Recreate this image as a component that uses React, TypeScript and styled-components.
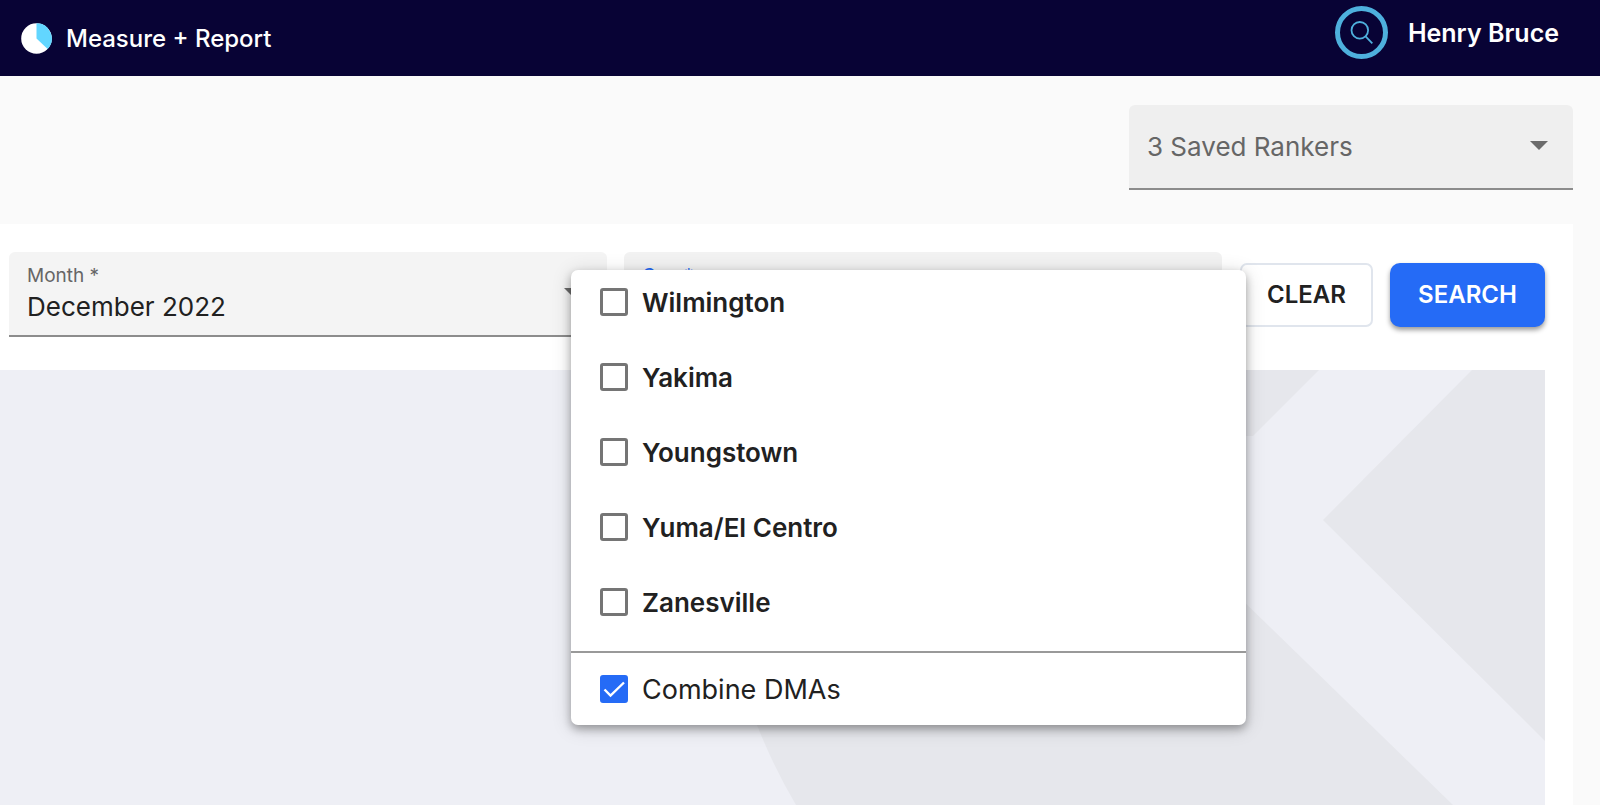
import React from "react";
import styled, { createGlobalStyle } from "styled-components";

const GlobalStyle = createGlobalStyle`
  *, *::before, *::after { box-sizing: border-box; }
  body {
    margin: 0;
    background: #fafafa;
    color: #212121;
    font-family: Inter, "Liberation Sans", sans-serif;
    font-size: 26px;
  }
  button, input, select { font: inherit; color: inherit; }
`;

const Page = styled.div`
  min-height: 100vh;
  display: flex;
  flex-direction: column;
  overflow: hidden;
`;

const Header = styled.header`
  height: 76px;
  padding: 0 41px 0 21px;
  display: flex;
  justify-content: space-between;
  align-items: center;
  background: #080335;
  color: #fff;
`;

const Brand = styled.a`
  display: flex;
  align-items: center;
  gap: 14px;
  color: inherit;
  text-decoration: none;
  font-size: 24px;
  font-weight: 500;
`;

const Account = styled.div`
  display: flex;
  align-items: center;
  gap: 20px;
  padding-bottom: 11px;
  font-size: 25px;
  font-weight: 600;
`;

const RoundButton = styled.button`
  width: 53px;
  height: 53px;
  padding: 0;
  display: grid;
  place-items: center;
  border: 5px solid #4eb0dd;
  border-radius: 50%;
  background: none;
  color: #4eb0dd;
`;

const SavedBar = styled.div`
  display: flex;
  justify-content: flex-end;
  padding: 29px 27px 34px;
`;

const Field = styled.div<{ $tone: string }>`
  position: relative;
  height: 85px;
  flex: 1;
  display: flex;
  flex-direction: column;
  justify-content: center;
  border-bottom: 2px solid #8c8c8c;
  border-radius: 6px 6px 0 0;
  background: ${(p) => p.$tone};
`;

const SavedField = styled(Field)`
  flex: 0 0 444px;
`;

const FieldLabel = styled.label<{ $active?: boolean }>`
  padding: 0 18px;
  font-size: 19px;
  line-height: 26px;
  color: ${(p) => (p.$active ? "#256bf6" : "#666")};
`;

const Select = styled.select<{ $muted?: boolean }>`
  width: 100%;
  height: 36px;
  padding: 0 18px;
  border: 0;
  outline: 0;
  appearance: none;
  background: none;
  color: ${(p) => (p.$muted ? "#666" : "#212121")};
`;

const Caret = styled.svg`
  position: absolute;
  right: 25px;
  top: 36px;
  width: 18px;
  height: 9px;
  fill: #6b6b6b;
  pointer-events: none;
`;

const Panel = styled.main`
  flex: 1;
  display: flex;
  flex-direction: column;
  margin-right: 27px;
  padding-right: 28px;
  background: #fff;
`;

const Filters = styled.form`
  display: flex;
  align-items: center;
  gap: 18px;
  padding: 28px 0 33px 9px;
`;

const Fields = styled.div`
  flex: 1;
  display: flex;
  gap: 17px;
`;

const Actions = styled.div`
  display: flex;
  gap: 17px;
`;

const Button = styled.button<{ $primary?: boolean }>`
  height: 64px;
  width: ${(p) => (p.$primary ? 155 : 133)}px;
  padding: 0;
  border: ${(p) => (p.$primary ? "0" : "2px solid #e0e5ed")};
  border-radius: ${(p) => (p.$primary ? 10 : 7)}px;
  background: ${(p) => (p.$primary ? "#256bf6" : "#fff")};
  color: ${(p) => (p.$primary ? "#fff" : "#212121")};
  box-shadow: ${(p) => (p.$primary ? "0 3px 5px rgba(0, 0, 0, 0.4)" : "none")};
  font-size: 24px;
  font-weight: 600;
`;

const Menu = styled.div`
  position: absolute;
  z-index: 2;
  top: 18px;
  left: -53px;
  right: -24px;
  border-radius: 7px;
  background: #fff;
  box-shadow: 0 4px 8px rgba(0, 0, 0, 0.3), 0 3px 20px rgba(0, 0, 0, 0.16);
`;

const Options = styled.div`
  display: flex;
  flex-direction: column;
  gap: 47px;
  padding: 18px 29px 35px;
  font-weight: 600;
`;

const Option = styled.label`
  display: flex;
  align-items: center;
  gap: 14px;
  height: 28px;
`;

const MenuFooter = styled.div`
  padding: 22px 29px;
  border-top: 2px solid #999;
  font-size: 27px;
`;

const Box = styled.span`
  position: relative;
  display: grid;
  width: 28px;
  height: 28px;
`;

const Checkbox = styled.input`
  width: 28px;
  height: 28px;
  margin: 0;
  appearance: none;
  border: 3px solid #757575;
  border-radius: 3px;
  background: #fff;
  &:checked { border-color: #256bf6; background: #256bf6; }
`;

const Tick = styled.svg`
  position: absolute;
  inset: 0;
  display: none;
  pointer-events: none;
  ${Checkbox}:checked + & { display: block; }
`;

const Canvas = styled.div`
  position: relative;
  flex: 1;
  min-height: 435px;
  background: #eeeff5;
`;

const Pattern = styled.svg`
  position: absolute;
  inset: 0;
  width: 100%;
  height: 100%;
  fill: #e6e7ec;
`;

const markets = ["Wilmington", "Yakima", "Youngstown", "Yuma/El Centro", "Zanesville"];

function Down() {
  return (
    <Caret viewBox="0 0 18 9" aria-hidden="true">
      <path d="M0 0h18l-9 9z" />
    </Caret>
  );
}

function CheckOption({ text, checked }: { text: string; checked?: boolean }) {
  return (
    <Option>
      <Box>
        <Checkbox type="checkbox" defaultChecked={checked} />
        <Tick viewBox="0 0 28 28" fill="none" stroke="#fff" strokeWidth="2.4">
          <path d="M4.5 14.5l6 6L24 7.5" />
        </Tick>
      </Box>
      {text}
    </Option>
  );
}

export default function App() {
  return (
    <Page>
      <GlobalStyle />
      <Header>
        <Brand href="#">
          <svg width="31" height="31" viewBox="0 0 31 31" aria-hidden="true">
            <circle cx="15.5" cy="15.5" r="15.3" fill="#fff" />
            <path d="M15.5 15.5V.2A15.3 15.3 0 0 1 26.6 26z" fill="#62d6ff" />
          </svg>
          Measure + Report
        </Brand>
        <Account>
          <RoundButton type="button" aria-label="Search">
            <svg width="23" height="23" viewBox="0 0 23 23" fill="none" stroke="currentColor" strokeWidth="1.8">
              <circle cx="9.8" cy="9.3" r="8.3" />
              <path d="M15.6 15.3l6.7 7" />
            </svg>
          </RoundButton>
          Henry Bruce
        </Account>
      </Header>
      <SavedBar>
        <SavedField $tone="#efefef">
          <Select $muted aria-label="Saved rankers">
            <option>3 Saved Rankers</option>
          </Select>
          <Down />
        </SavedField>
      </SavedBar>
      <Panel>
        <Filters onSubmit={(e: React.FormEvent) => e.preventDefault()}>
          <Fields>
            <Field $tone="#f4f4f4">
              <FieldLabel htmlFor="month">Month *</FieldLabel>
              <Select id="month">
                <option>December 2022</option>
              </Select>
              <Down />
            </Field>
            <Field $tone="#f2f2f2">
              <FieldLabel htmlFor="geo" $active>Geo *</FieldLabel>
              <Select id="geo" />
              <Menu>
                <Options>
                  {markets.map((m) => <CheckOption key={m} text={m} />)}
                </Options>
                <MenuFooter>
                  <CheckOption text="Combine DMAs" checked />
                </MenuFooter>
              </Menu>
            </Field>
          </Fields>
          <Actions>
            <Button type="reset">CLEAR</Button>
            <Button type="submit" $primary>SEARCH</Button>
          </Actions>
        </Filters>
        <Canvas>
          <Pattern viewBox="0 0 1545 435" preserveAspectRatio="xMaxYMin slice" aria-hidden="true">
            <path d="M1200 0h119l-66 66h-53z" />
            <path d="M1472 0h73v371L1323 150z" />
            <path d="M1200 189l253 246H796Q773 396 757 355V189z" />
          </Pattern>
        </Canvas>
      </Panel>
    </Page>
  );
}
